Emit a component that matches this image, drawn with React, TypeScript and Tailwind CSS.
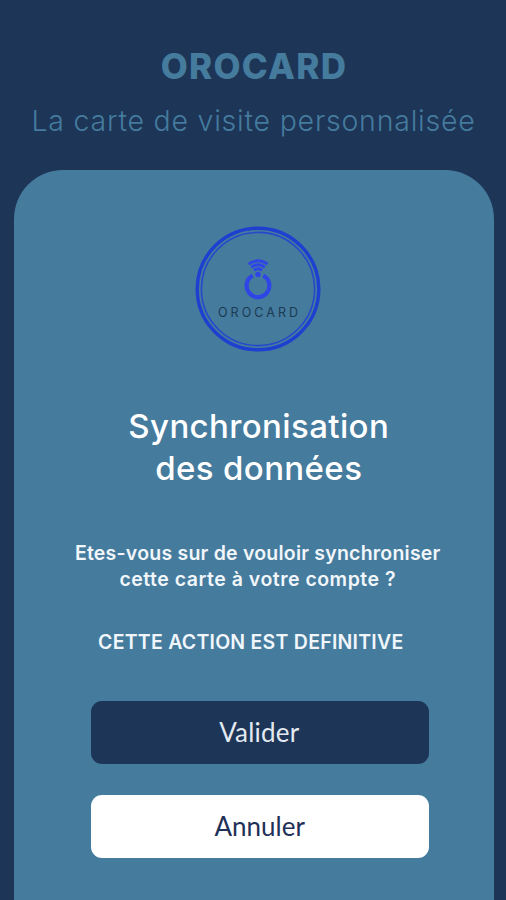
const SANS = "font-[Inter,'Open_Sans',sans-serif]";

function OrocardLogo() {
  return (
    <svg
      width="128"
      height="128"
      viewBox="0 0 128 128"
      fill="none"
      role="img"
      aria-label="Orocard"
    >
      {/* double ring */}
      <circle cx="64" cy="64" r="60.8" stroke="#1f3fd0" strokeWidth="3.4" />
      <circle cx="64" cy="64" r="56.6" stroke="#2848cc" strokeWidth="1.6" />

      {/* open ring with the contactless waves on top */}
      <path
        d="M58.7 50.6a11.4 11.4 0 1 0 10.6 0"
        stroke="#2f45e6"
        strokeWidth="4.2"
      />
      <circle cx="64" cy="49.4" r="2.7" fill="#2f45e6" />
      <path
        d="M54.6 39.2a14.6 14.6 0 0 1 18.8 0M57.2 42.4a10.4 10.4 0 0 1 13.6 0M60 45.4a6.4 6.4 0 0 1 8 0"
        stroke="#2f45e6"
        strokeWidth="3"
      />

      <text
        x="24"
        y="92"
        textLength="80"
        fontSize="12.5"
        fontFamily="Inter, sans-serif"
        fill="#1b3a54"
      >
        OROCARD
      </text>
    </svg>
  );
}

export default function App() {
  return (
    <div className="flex h-[900px] w-full flex-col overflow-hidden bg-[#1d3557]">
      <header className={`${SANS} flex h-[170px] shrink-0 flex-col items-center pt-[46px] text-[#457b9d]`}>
        <h1 className="mr-[-2px] text-[35px] leading-[40px] font-extrabold tracking-[1.3px] whitespace-nowrap">
          OROCARD
        </h1>
        <p className="mr-[-1px] mt-[18px] text-[28.5px] leading-[34px] font-light tracking-[0.78px] whitespace-nowrap">
          La carte de visite personnalisée
        </p>
      </header>

      <main className="mr-[12px] ml-[13.5px] flex grow flex-col items-center rounded-t-[49px] bg-[#457b9d] pt-[55px]">
        <div className="mr-[-8px]">
          <OrocardLogo />
        </div>

        <h2 className={`${SANS} mt-[52px] mr-[-10px] text-center text-[33px] leading-[42px] font-medium tracking-[0.38px] whitespace-nowrap text-white`}>
          Synchronisation
          <br />
          des données
        </h2>

        <p className={`${SANS} mt-[51px] mr-[-8px] text-center text-[19.5px] leading-[26px] font-semibold tracking-[0.22px] whitespace-nowrap text-[#f1f6fb]`}>
          Etes-vous sur de vouloir synchroniser
          <br />
          <span className="tracking-[0.5px]">cette carte à votre compte ?</span>
        </p>

        <p className={`${SANS} mt-[37px] mr-[6px] text-[19.5px] leading-[26px] font-semibold tracking-[0.24px] whitespace-nowrap text-[#f1f6fb]`}>
          CETTE ACTION EST DEFINITIVE
        </p>

        <div className="mt-[46px] mr-[-13px] flex w-[338px] flex-col gap-[31px] font-[Lato,sans-serif] text-[26px]">
          <button className="h-[63px] rounded-[11px] bg-[#1d3557] pr-[2px] tracking-[0.2px] text-[#e3e9f0]">
            Valider
          </button>
          <button className="h-[63px] rounded-[11px] bg-white pr-[1px] text-[#1f3157]">
            Annuler
          </button>
        </div>
      </main>
    </div>
  );
}
